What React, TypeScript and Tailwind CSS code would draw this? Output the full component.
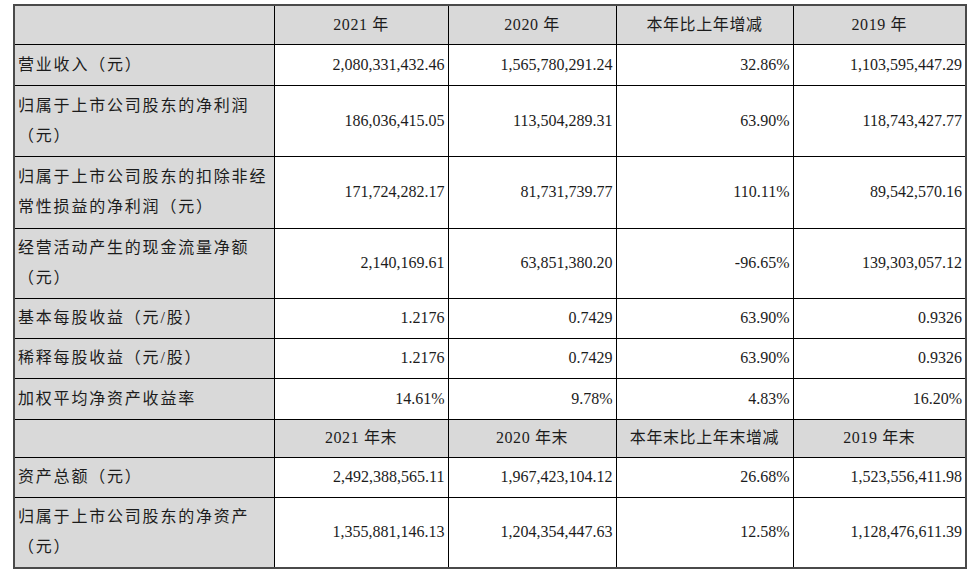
import React from "react";

type Row = { label: string[]; values: string[]; h: string };

const yearRows: Row[] = [
  { label: ["营业收入（元）"], values: ["2,080,331,432.46", "1,565,780,291.24", "32.86%", "1,103,595,447.29"], h: "h-[41px]" },
  { label: ["归属于上市公司股东的净利润", "（元）"], values: ["186,036,415.05", "113,504,289.31", "63.90%", "118,743,427.77"], h: "h-[71px]" },
  { label: ["归属于上市公司股东的扣除非经", "常性损益的净利润（元）"], values: ["171,724,282.17", "81,731,739.77", "110.11%", "89,542,570.16"], h: "h-[72px]" },
  { label: ["经营活动产生的现金流量净额", "（元）"], values: ["2,140,169.61", "63,851,380.20", "-96.65%", "139,303,057.12"], h: "h-[70px]" },
  { label: ["基本每股收益（元/股）"], values: ["1.2176", "0.7429", "63.90%", "0.9326"], h: "h-[40px]" },
  { label: ["稀释每股收益（元/股）"], values: ["1.2176", "0.7429", "63.90%", "0.9326"], h: "h-[40px]" },
  { label: ["加权平均净资产收益率"], values: ["14.61%", "9.78%", "4.83%", "16.20%"], h: "h-[41px]" },
];

const endRows: Row[] = [
  { label: ["资产总额（元）"], values: ["2,492,388,565.11", "1,967,423,104.12", "26.68%", "1,523,556,411.98"], h: "h-[40px]" },
  { label: ["归属于上市公司股东的净资产", "（元）"], values: ["1,355,881,146.13", "1,204,354,447.63", "12.58%", "1,128,476,611.39"], h: "h-[71px]" },
];

function HeaderRow({ cols, h }: { cols: string[]; h: string }) {
  return (
    <tr className={h}>
      <td className="border border-black bg-[#d9d9d9]" />
      {cols.map((c) => (
        <td key={c} className="border border-black bg-[#d9d9d9] text-center tracking-[0.6px]">
          {c}
        </td>
      ))}
    </tr>
  );
}

function DataRow({ row }: { row: Row }) {
  return (
    <tr className={row.h}>
      <td className="border border-black bg-[#d9d9d9] pl-[3px] align-middle tracking-[1.8px] leading-[30px]">
        {row.label.map((l) => (
          <div key={l} className="whitespace-nowrap">{l}</div>
        ))}
      </td>
      {row.values.map((v, i) => (
        <td key={i} className="border border-black bg-white pr-[3px] text-right align-middle">
          {v}
        </td>
      ))}
    </tr>
  );
}

export default function App() {
  return (
    <div className="w-[975px] h-[572px] bg-white pt-[4px] pl-[13px] overflow-hidden">
      <table
        className="table-fixed border-collapse border-2 border-[#4a4a4a] w-[952px] text-[16px] text-[#1c1c1c]"
        style={{ fontFamily: '"Liberation Serif", "Noto Sans CJK SC", serif' }}
      >
        <colgroup>
          <col className="w-[260px]" />
          <col className="w-[174px]" />
          <col className="w-[168px]" />
          <col className="w-[177px]" />
          <col className="w-[173px]" />
        </colgroup>
        <tbody>
          <HeaderRow cols={["2021 年", "2020 年", "本年比上年增减", "2019 年"]} h="h-[39px]" />
          {yearRows.map((r) => (
            <DataRow key={r.label[0]} row={r} />
          ))}
          <HeaderRow cols={["2021 年末", "2020 年末", "本年末比上年末增减", "2019 年末"]} h="h-[38px]" />
          {endRows.map((r) => (
            <DataRow key={r.label[0]} row={r} />
          ))}
        </tbody>
      </table>
    </div>
  );
}
